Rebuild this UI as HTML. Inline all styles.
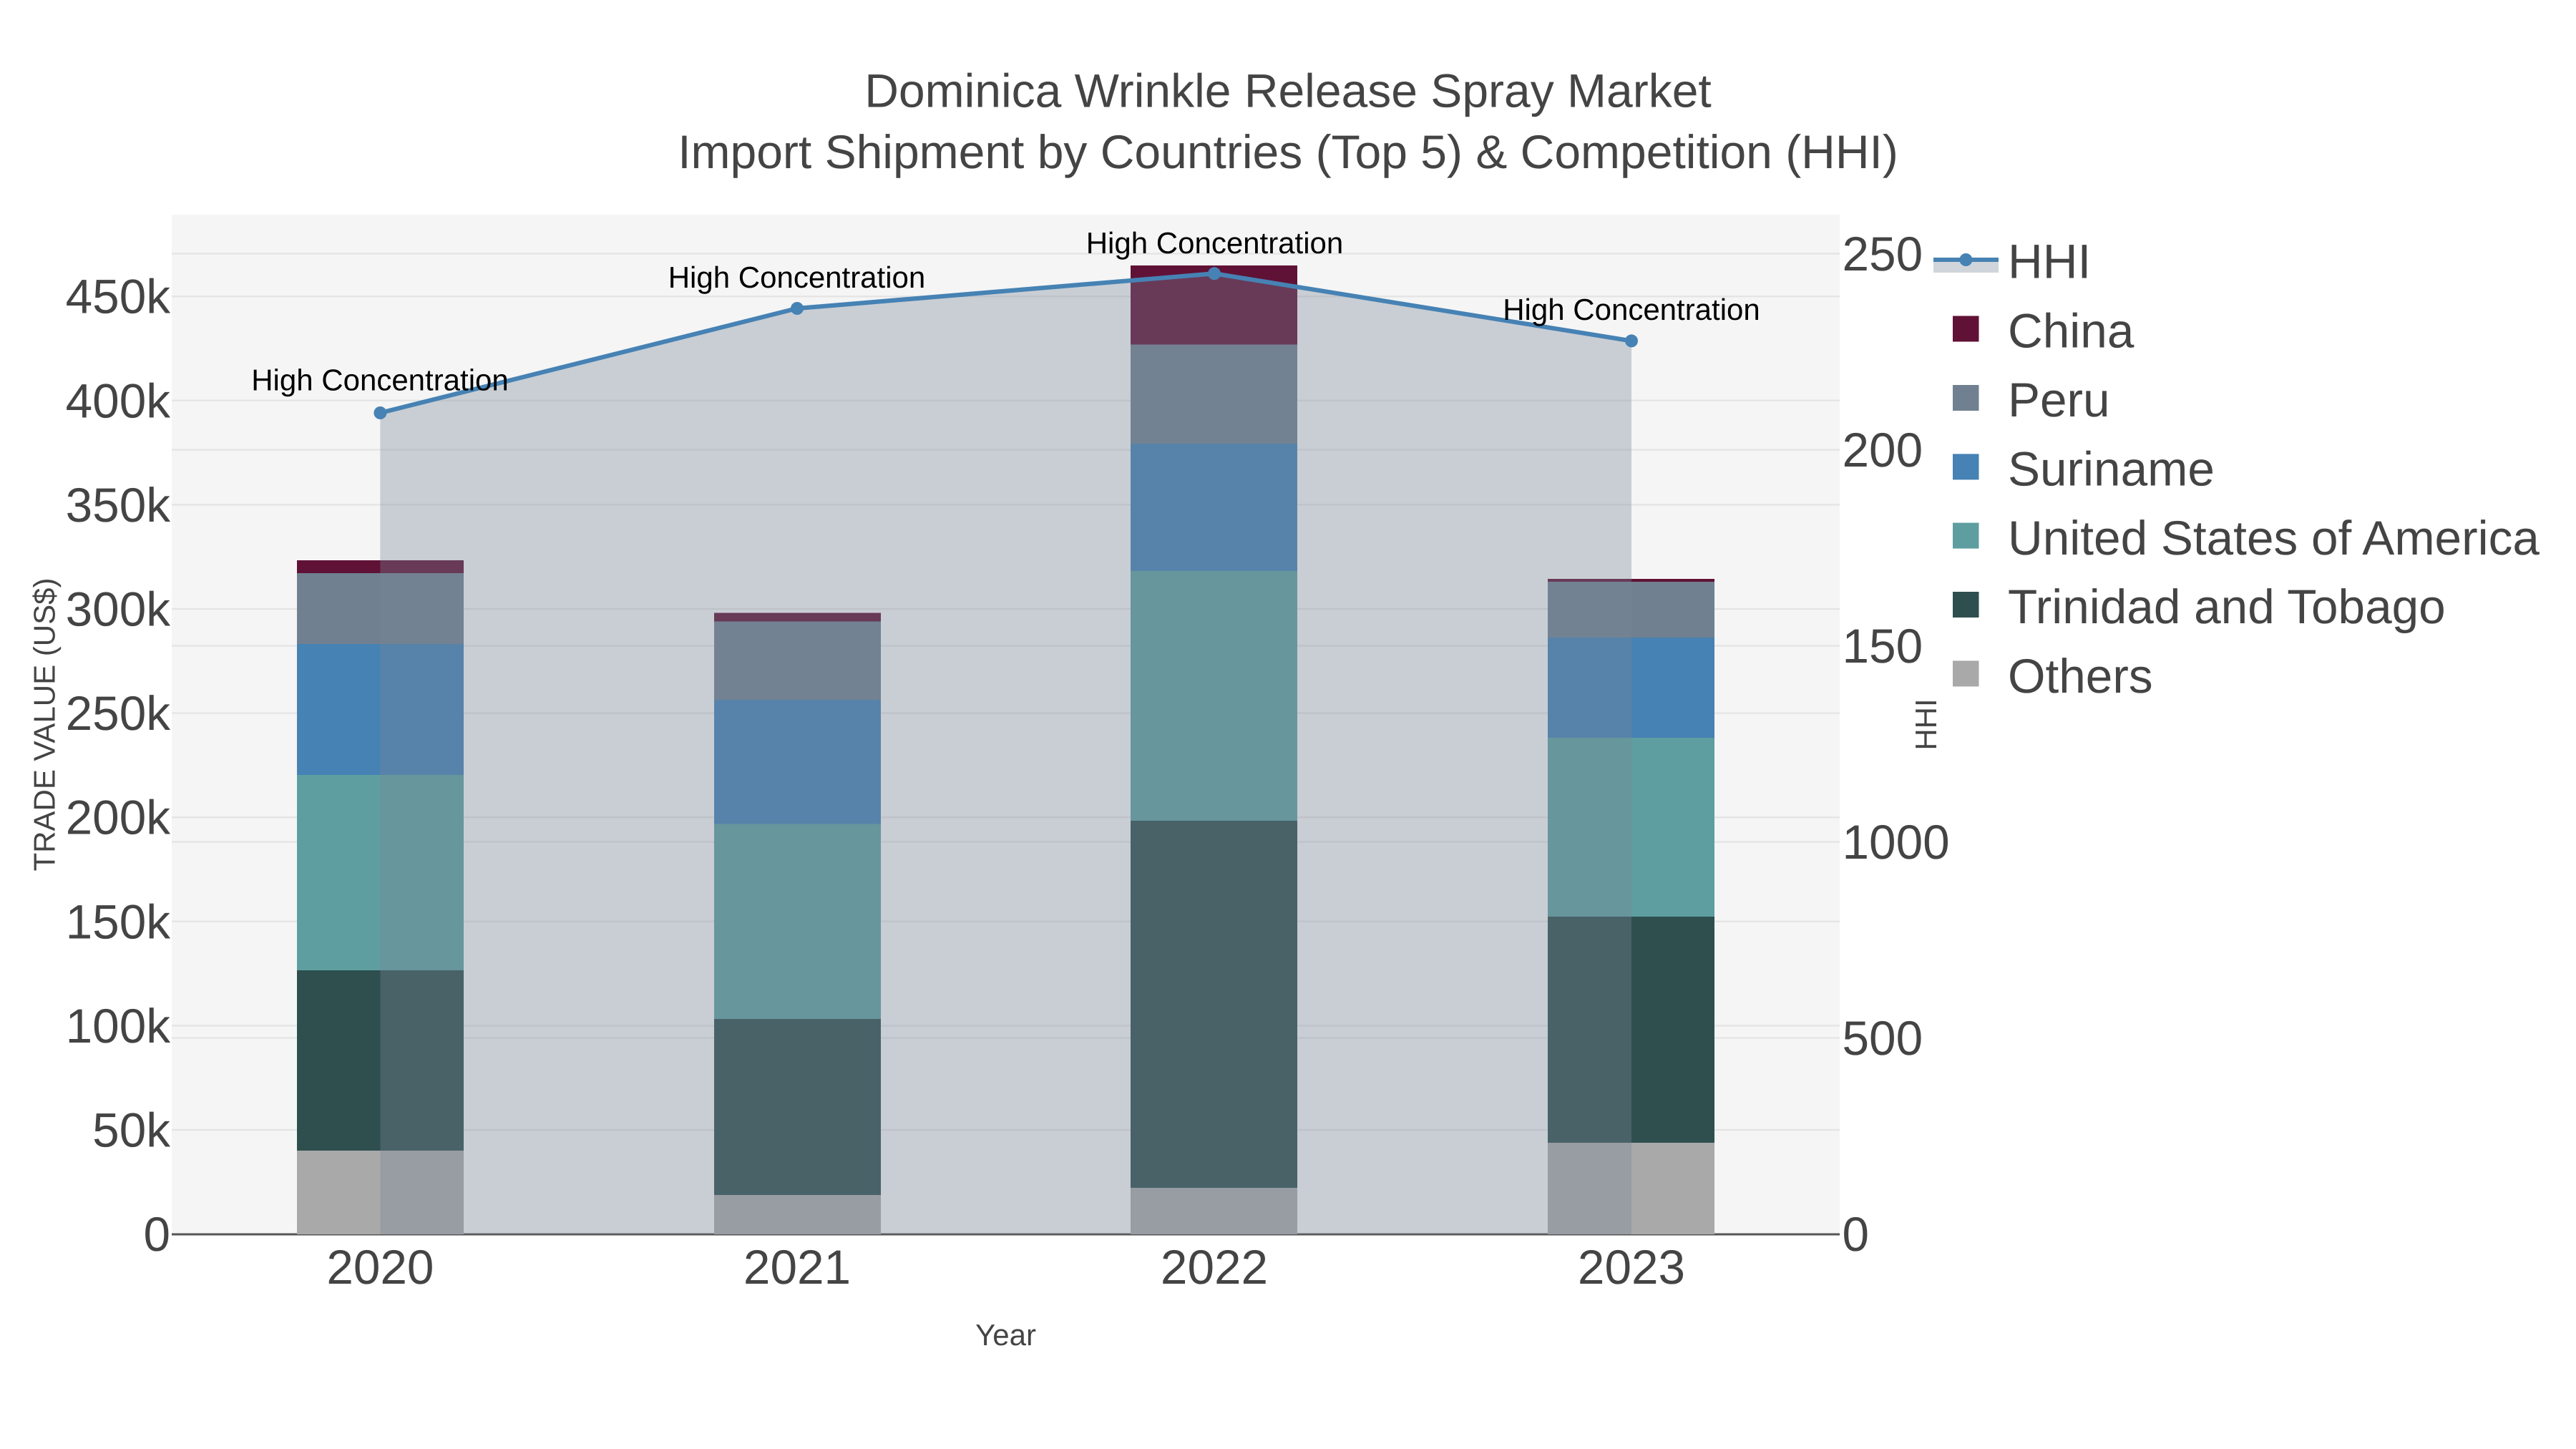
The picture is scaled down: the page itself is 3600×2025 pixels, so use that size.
<!DOCTYPE html>
<html><head><meta charset="utf-8"><title>Dominica Wrinkle Release Spray Market</title>
<style>
html,body{margin:0;padding:0;background:#fff;width:3600px;height:2025px;overflow:hidden}
svg{display:block}
text{font-family:"Liberation Sans",Arial,sans-serif;fill:#444;text-rendering:geometricPrecision}
</style></head><body>
<svg width="3600" height="2025" viewBox="0 0 3600 2025" xmlns="http://www.w3.org/2000/svg">
<rect width="3600" height="2025" fill="#fff"/>
<rect x="240" y="300" width="2331" height="1425" fill="#f5f5f5"/>
<!-- grid -->
<g stroke="#e4e4e4" stroke-width="2.25">
<path d="M240 1579H2571M240 1433.4H2571M240 1287.8H2571M240 1142.2H2571M240 996.6H2571M240 851H2571M240 705.4H2571M240 559.8H2571M240 414.2H2571"/>
<path d="M240 1450.5H2571M240 1176.5H2571M240 902.5H2571M240 628.5H2571M240 354.5H2571"/>
</g>
<rect x="240" y="1723.5" width="2331" height="3" fill="#555"/>
<!-- bars -->
<g>
<rect x="415" y="783" width="233" height="18" fill="#601236"/>
<rect x="415" y="801" width="233" height="99" fill="#708090"/>
<rect x="415" y="900" width="233" height="183" fill="#4682b4"/>
<rect x="415" y="1083" width="233" height="273" fill="#5f9ea0"/>
<rect x="415" y="1356" width="233" height="252" fill="#2f4f4f"/>
<rect x="415" y="1608" width="233" height="117" fill="#a9a9a9"/>

<rect x="998" y="856.5" width="233" height="12" fill="#601236"/>
<rect x="998" y="868.5" width="233" height="109.5" fill="#708090"/>
<rect x="998" y="978" width="233" height="173.5" fill="#4682b4"/>
<rect x="998" y="1151.5" width="233" height="272.5" fill="#5f9ea0"/>
<rect x="998" y="1424" width="233" height="246" fill="#2f4f4f"/>
<rect x="998" y="1670" width="233" height="55" fill="#a9a9a9"/>

<rect x="1580" y="371" width="233" height="110.5" fill="#601236"/>
<rect x="1580" y="481.5" width="233" height="138.5" fill="#708090"/>
<rect x="1580" y="620" width="233" height="178" fill="#4682b4"/>
<rect x="1580" y="798" width="233" height="349" fill="#5f9ea0"/>
<rect x="1580" y="1147" width="233" height="513" fill="#2f4f4f"/>
<rect x="1580" y="1660" width="233" height="65" fill="#a9a9a9"/>

<rect x="2163" y="809" width="233" height="4" fill="#601236"/>
<rect x="2163" y="813" width="233" height="78" fill="#708090"/>
<rect x="2163" y="891" width="233" height="140" fill="#4682b4"/>
<rect x="2163" y="1031" width="233" height="250" fill="#5f9ea0"/>
<rect x="2163" y="1281" width="233" height="316" fill="#2f4f4f"/>
<rect x="2163" y="1597" width="233" height="128" fill="#a9a9a9"/>
</g>
<!-- HHI area + line -->
<path d="M531.4 577L1114 431L1697 382.3L2280 476.4V1725H531.4Z" fill="rgb(120,134,152)" fill-opacity="0.35"/>
<path d="M531.4 577L1114 431L1697 382.3L2280 476.4" fill="none" stroke="#4682b4" stroke-width="6.2"/>
<g fill="#4682b4"><circle cx="531.4" cy="577" r="9"/><circle cx="1114" cy="431" r="9"/><circle cx="1697" cy="382.3" r="9"/><circle cx="2280" cy="476.4" r="9"/></g>
<!-- annotations -->
<g font-size="42" text-anchor="middle" style="fill:#000">
<text x="531" y="545.5" style="fill:#000">High Concentration</text>
<text x="1113.5" y="402" style="fill:#000">High Concentration</text>
<text x="1697.5" y="354" style="fill:#000">High Concentration</text>
<text x="2280" y="447" style="fill:#000">High Concentration</text>
</g>
<!-- title -->
<text x="1800" y="149.3" font-size="66" text-anchor="middle">Dominica Wrinkle Release Spray Market</text>
<text x="1800" y="235" font-size="66" text-anchor="middle">Import Shipment by Countries (Top 5) &amp; Competition (HHI)</text>
<!-- left ticks -->
<g font-size="67.5" text-anchor="end">
<text x="238" y="1748">0</text>
<text x="238" y="1602.5">50k</text>
<text x="238" y="1457">100k</text>
<text x="238" y="1311.3">150k</text>
<text x="238" y="1165.7">200k</text>
<text x="238" y="1020">250k</text>
<text x="238" y="874.5">300k</text>
<text x="238" y="729">350k</text>
<text x="238" y="583.3">400k</text>
<text x="238" y="437.7">450k</text>
</g>
<!-- right ticks -->
<g font-size="67.5">
<text x="2574.5" y="1748">0</text>
<text x="2574.5" y="1474">500</text>
<text x="2574.5" y="1200">1000</text>
<text x="2574.5" y="926">1500</text>
<text x="2574.5" y="652">2000</text>
<text x="2574.5" y="378">2500</text>
</g>
<!-- x ticks -->
<g font-size="67.5" text-anchor="middle">
<text x="531.4" y="1794">2020</text>
<text x="1114" y="1794">2021</text>
<text x="1697" y="1794">2022</text>
<text x="2280" y="1794">2023</text>
</g>
<!-- axis titles -->
<text x="1405.5" y="1880" font-size="42" text-anchor="middle">Year</text>
<text transform="translate(76.7 1012.5) rotate(-90)" font-size="42" text-anchor="middle">TRADE VALUE (US$)</text>
<!-- legend -->
<rect x="2688" y="310" width="912" height="660" fill="#fff"/>
<text transform="translate(2706 1012.5) rotate(-90)" font-size="42" text-anchor="middle">HHI</text>
<rect x="2702" y="363" width="91" height="18" fill="rgb(120,134,152)" fill-opacity="0.35"/>
<rect x="2702" y="360" width="91" height="6" fill="#4682b4"/>
<circle cx="2747.4" cy="363" r="9" fill="#4682b4"/>
<rect x="2729" y="441.5" width="36.5" height="36" fill="#601236"/>
<rect x="2729" y="538" width="36.5" height="36" fill="#708090"/>
<rect x="2729" y="634.4" width="36.5" height="36" fill="#4682b4"/>
<rect x="2729" y="730.6" width="36.5" height="36" fill="#5f9ea0"/>
<rect x="2729" y="827" width="36.5" height="36" fill="#2f4f4f"/>
<rect x="2729" y="923.4" width="36.5" height="36" fill="#a9a9a9"/>
<g font-size="67.5">
<text x="2806" y="388.5">HHI</text>
<text x="2806" y="485.5">China</text>
<text x="2806" y="582">Peru</text>
<text x="2806" y="678.6">Suriname</text>
<text x="2806" y="775">United States of America</text>
<text x="2806" y="871">Trinidad and Tobago</text>
<text x="2806" y="968">Others</text>
</g>
</svg>
</body></html>
